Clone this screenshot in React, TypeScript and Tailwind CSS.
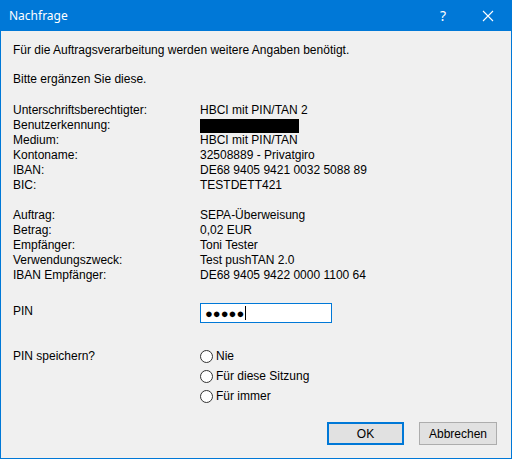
import React from "react";

const account = [
  ["Unterschriftsberechtigter:", "HBCI mit PIN/TAN 2"],
  ["Benutzerkennung:", null],
  ["Medium:", "HBCI mit PIN/TAN"],
  ["Kontoname:", "32508889 - Privatgiro"],
  ["IBAN:", "DE68 9405 9421 0032 5088 89"],
  ["BIC:", "TESTDETT421"],
];

const order = [
  ["Auftrag:", "SEPA-Überweisung"],
  ["Betrag:", "0,02 EUR"],
  ["Empfänger:", "Toni Tester"],
  ["Verwendungszweck:", "Test pushTAN 2.0"],
  ["IBAN Empfänger:", "DE68 9405 9422 0000 1100 64"],
];

const Rows = ({ rows }: { rows: (string | null)[][] }) => (
  <div className="flex flex-col">
    {rows.map(([label, value]) => (
      <div key={label} className="flex h-[15px] items-center leading-[15px]">
        <span className="w-[187px]">{label}</span>
        {value === null ? (
          <span className="h-[14px] w-[99px] bg-black" />
        ) : (
          <span>{value}</span>
        )}
      </div>
    ))}
  </div>
);

const Radio = ({ label }: { label: string }) => (
  <div className="flex h-[20px] items-center gap-[3px]">
    <span className="h-[13px] w-[13px] rounded-full border border-[#333] bg-white" />
    <span>{label}</span>
  </div>
);

export default function App() {
  return (
    <div className="flex h-[459px] w-[512px] flex-col border border-t-0 border-[#0078d7] bg-[#f0f0f0] font-['Liberation_Sans',Arial,sans-serif] text-[12px] text-black">
      <div className="flex h-[31px] shrink-0 items-center bg-[#0078d7] pl-[8px] text-white">
        <span className="font-['Noto_Sans',sans-serif] text-[12px]">Nachfrage</span>
        <span className="ml-auto mr-[36px] font-['Noto_Sans',sans-serif] text-[14px]">?</span>
        <svg className="mr-[17px] h-[12px] w-[12px]" viewBox="0 0 12 12">
          <path d="M1 1L11 11M11 1L1 11" stroke="white" strokeWidth="1.1" />
        </svg>
      </div>

      <div className="flex flex-1 flex-col pl-[12px] pr-[14px]">
        <p className="mt-[12px] leading-[15px]">
          Für die Auftragsverarbeitung werden weitere Angaben benötigt.
        </p>
        <p className="mt-[14px] leading-[15px]">Bitte ergänzen Sie diese.</p>

        <div className="mt-[16px]">
          <Rows rows={account} />
        </div>
        <div className="mt-[15px]">
          <Rows rows={order} />
        </div>

        <div className="mt-[20px] flex items-start">
          <span className="w-[187px] pt-[1px] leading-[15px]">PIN</span>
          <div className="flex h-[20px] w-[132px] items-center border border-[#0078d7] bg-white pl-[4px]">
            <span className="text-[13px] leading-none tracking-[0px]">●●●●●</span>
            <span className="ml-[1px] h-[14px] w-px bg-black" />
          </div>
        </div>

        <div className="mt-[23px] flex items-start">
          <span className="flex h-[20px] w-[187px] items-center">PIN speichern?</span>
          <div className="flex flex-col">
            <Radio label="Nie" />
            <Radio label="Für diese Sitzung" />
            <Radio label="Für immer" />
          </div>
        </div>

        <div className="mt-[16px] flex justify-end gap-[15px]">
          <button className="h-[23px] w-[77px] border-2 border-[#0078d7] bg-[#e1e1e1]">OK</button>
          <button className="h-[23px] w-[78px] border border-[#adadad] bg-[#e1e1e1]">Abbrechen</button>
        </div>
      </div>
    </div>
  );
}
